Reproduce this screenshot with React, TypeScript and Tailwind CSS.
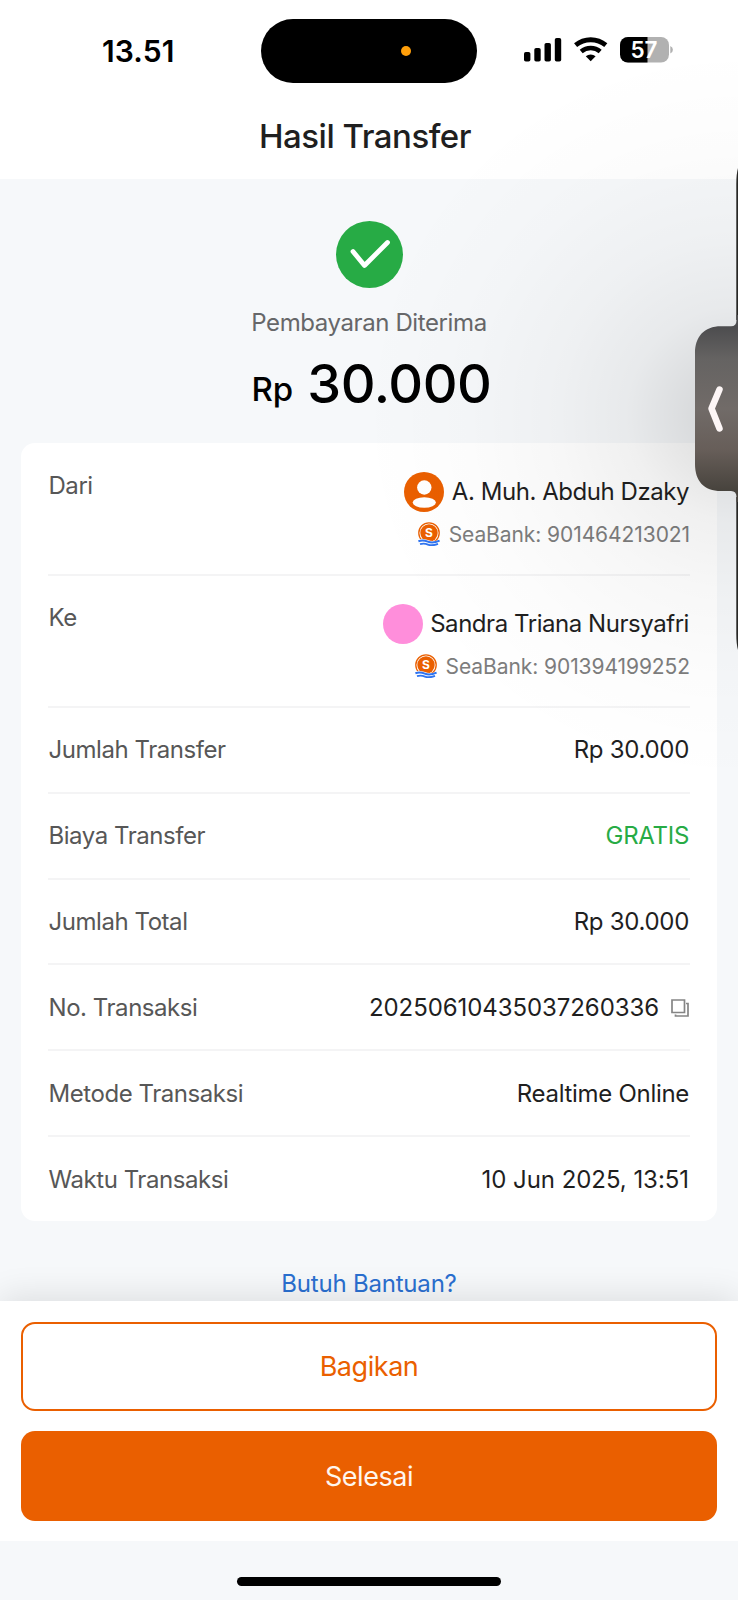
import type { ReactNode } from "react";

function StatusBar() {
  return (
    <div className="flex h-[101px] items-start">
      <div className="mt-[36px] w-[261px] pl-[102px] text-[30px] font-semibold leading-[30px] tracking-[0.1px] text-black">
        13.51
      </div>
      <div className="mt-[19px] flex h-[63.5px] w-[216px] items-center rounded-full bg-black pl-[140px] pt-px">
        <span className="size-[10px] rounded-full bg-[#ff9f0a]" />
      </div>
      <svg className="ml-[47px] mt-[37px]" width="150" height="26" viewBox="0 0 150 26">
        <rect x="0" y="15" width="6.4" height="9.5" rx="1.8" />
        <rect x="10.3" y="11" width="6.4" height="13.5" rx="1.8" />
        <rect x="20.5" y="6" width="6.4" height="18.5" rx="1.8" />
        <rect x="30.8" y="1" width="6.4" height="23.5" rx="1.8" />
        <path d="M51.6 8.2a23.6 23.6 0 0 1 30.2 0" fill="none" stroke="#000" strokeWidth="4.8" />
        <path d="M57.2 14.5a14.6 14.6 0 0 1 19 0" fill="none" stroke="#000" strokeWidth="4.5" />
        <path d="M66.7 24.2l-4.9-4.9a7.2 7.2 0 0 1 9.8 0z" />
        <clipPath id="charge">
          <rect x="96" y="0" width="27.5" height="26" />
        </clipPath>
        <rect x="96" y="0" width="49" height="25.6" rx="8" fill="#b1b1b1" />
        <rect x="96" y="0" width="49" height="25.6" rx="8" clipPath="url(#charge)" />
        <path d="M146.3 9q2.6 1 2.6 3.8t-2.6 3.8z" fill="#b1b1b1" />
        <text x="120" y="21" textAnchor="middle" fill="#fff" fontSize="22.5" fontWeight="600">
          57
        </text>
      </svg>
    </div>
  );
}

function SeaBankIcon() {
  return (
    <svg className="-mt-[3px]" width="22" height="24" viewBox="0 0 22 24">
      <circle cx="11" cy="11" r="10.2" fill="#fff" stroke="#ea5f00" strokeWidth="1.3" />
      <circle cx="11" cy="11" r="8.7" fill="#ea5f00" />
      <text x="11" y="15" textAnchor="middle" fontSize="12" fontWeight="700" fill="#fff">
        S
      </text>
      <path d="M0 17.5q5-1.5 10 .6t12-.6V24H0z" fill="#fff" />
      <path d="M.4 19.2q4.6-1.7 9.4.4t11.8-.9" fill="none" stroke="#2f74f0" strokeWidth="2" />
      <path d="M2 22.2q4-1.3 8 .4t10-.8" fill="none" stroke="#2f74f0" strokeWidth="1.9" />
    </svg>
  );
}

function UserAvatar() {
  return (
    <svg className="mr-px" width="40" height="40" viewBox="0 0 40 40">
      <circle cx="20" cy="20" r="20" fill="#ea5f00" />
      <circle cx="20.3" cy="15.5" r="7.2" fill="#fff" />
      <ellipse cx="20.3" cy="30.5" rx="11.6" ry="5.2" fill="#fff" />
    </svg>
  );
}

type PartyProps = { label: string; avatar: ReactNode; name: string; account: string; box: string };

function Party({ label, avatar, name, account, box }: PartyProps) {
  return (
    <div className={`flex justify-between border-b-2 border-[#f4f4f5] ${box}`}>
      <div className="pl-[0.5px] text-2xl leading-[25px] tracking-[-0.45px] text-[#575757]">{label}</div>
      <div className="flex flex-col items-end justify-end pb-[26px]">
        <div className="flex h-10 items-center gap-[7px] pr-px">
          {avatar}
          <span className="text-2xl tracking-[-0.45px]">{name}</span>
        </div>
        <div className="mt-[10px] flex h-[26px] items-center gap-[9px]">
          <SeaBankIcon />
          <span className="text-[21px] leading-[26px] tracking-[-0.08px] text-[#7d7d7d]">SeaBank: {account}</span>
        </div>
      </div>
    </div>
  );
}

type RowProps = { label: string; children: ReactNode; last?: boolean; track?: string };

function Row({ label, children, last, track = "tracking-[-0.3px]" }: RowProps) {
  return (
    <div
      className={`flex flex-1 items-center justify-between pl-[0.5px] pr-px pt-px text-2xl ${last ? "" : "border-b-2 border-[#f4f4f5]"}`}
    >
      <span className="tracking-[-0.45px] text-[#575757]">{label}</span>
      <span className={`flex items-center ${track}`}>{children}</span>
    </div>
  );
}

function SidePanel() {
  return (
    <div className="pointer-events-none absolute right-0 top-0 h-[900px] w-[420px] overflow-hidden">
      <div className="absolute inset-0 bg-[radial-gradient(ellipse_380px_370px_at_420px_415px,rgba(0,0,0,0.16)_0%,rgba(0,0,0,0.11)_14%,rgba(0,0,0,0.06)_29%,rgba(0,0,0,0.03)_48%,rgba(0,0,0,0.01)_72%,transparent_100%)]" />
      <svg className="absolute right-0 top-[160px]" width="44" height="500" viewBox="0 0 44 500">
        <defs>
          <linearGradient id="tab" x1="0" y1="166" x2="0" y2="331" gradientUnits="userSpaceOnUse">
            <stop offset="0" stopColor="#4c4c4e" />
            <stop offset=".2" stopColor="#656362" />
            <stop offset=".5" stopColor="#716b68" />
            <stop offset=".75" stopColor="#675e59" />
            <stop offset="1" stopColor="#47433d" />
          </linearGradient>
        </defs>
        <path d="M44 8Q42.3 14 42.3 24V160H44zM42.3 337H44V490Q42.3 484 42.3 474z" fill="#272725" />
        <path
          d="M44 155H42.5V160Q42.5 166.3 37 166.3H27C10 166.3 1 177 1 193V304C1 321 10 331 27 331H37Q42.5 331 42.5 337V342H44z"
          fill="url(#tab)"
        />
        <path
          d="M25.5 229.5L17.5 248.5L25.5 268.5"
          fill="none"
          stroke="#fdf6f6"
          strokeWidth="6.5"
          strokeLinecap="round"
          strokeLinejoin="round"
        />
      </svg>
    </div>
  );
}

export default function App() {
  return (
    <div className="relative flex h-[1600px] w-[738px] flex-col overflow-hidden bg-[#f6f8fa] font-['Inter',sans-serif] text-[#1f1f1f]">
      <header className="h-[179px] bg-white">
        <StatusBar />
        <h1 className="-ml-2 text-center text-[33px] font-medium leading-[70px] tracking-[-0.5px]">Hasil Transfer</h1>
      </header>

      <section className="flex h-[264px] flex-col items-center pt-[42px]">
        <svg width="67" height="67" viewBox="0 0 67 67">
          <circle cx="33.5" cy="33.5" r="33.5" fill="#27ab45" />
          <path
            d="M17 30.5L28.5 44.5L51.5 21.5"
            fill="none"
            stroke="#fff"
            strokeWidth="4.8"
            strokeLinecap="round"
            strokeLinejoin="round"
          />
        </svg>
        <p className="mt-5 text-2xl leading-[30px] tracking-[-0.4px] text-[#666769]">Pembayaran Diterima</p>
        <p className="mt-[16px] flex items-baseline pl-[5px] leading-[60px] text-black">
          <span className="self-end text-[33px] font-medium leading-[50px]">Rp</span>
          <span className="ml-[14px] text-[54px] font-medium tracking-[-0.4px]">30.000</span>
        </p>
      </section>

      <main className="mx-[21px] flex h-[778px] shrink-0 flex-col rounded-[14px] bg-white px-[27px]">
        <Party
          label="Dari"
          avatar={<UserAvatar />}
          name="A. Muh. Abduh Dzaky"
          account="901464213021"
          box="h-[133px] pt-[30px]"
        />
        <Party
          label="Ke"
          avatar={<span className="size-10 rounded-full bg-[#ff8edb]" />}
          name="Sandra Triana Nursyafri"
          account="901394199252"
          box="h-[132px] pt-[29px]"
        />
        <Row label="Jumlah Transfer">Rp 30.000</Row>
        <Row label="Biaya Transfer">
          <span className="text-[#27ab45]">GRATIS</span>
        </Row>
        <Row label="Jumlah Total">Rp 30.000</Row>
        <Row label="No. Transaksi" track="tracking-[-0.08px]">
          20250610435037260336
          <svg className="ml-[12px]" width="18" height="18" viewBox="0 0 18 18" fill="none" stroke="#858585" strokeWidth="1.7">
            <path d="M1 1H13.5V13.5H1zM15 4.5H17V17H4.5V15.5" />
          </svg>
        </Row>
        <Row label="Metode Transaksi">Realtime Online</Row>
        <Row label="Waktu Transaksi" track="tracking-[-0.05px]" last>
          10 Jun 2025, 13:51
        </Row>
      </main>

      <div className="flex h-[80px] shrink-0 items-end justify-center pb-[2px]">
        <a className="text-2xl leading-[30px] tracking-[-0.2px] text-[#2a6fd0]">Butuh Bantuan?</a>
      </div>

      <footer className="flex h-[240px] shrink-0 flex-col gap-5 bg-white px-[21px] pt-[21px] text-[27px] tracking-[-0.45px] shadow-[0_-4px_32px_rgba(0,0,0,0.11)]">
        <button className="h-[89px] rounded-[14px] border-2 border-[#ea5f00] pt-[2px] text-[#ea5f00]">Bagikan</button>
        <button className="h-[90px] rounded-[14px] bg-[#ea5f00] pt-[2px] text-[#fff6ee]">Selesai</button>
      </footer>
      <div className="z-10 flex flex-1 justify-center bg-[#f6f8fa] pt-[36px]">
        <div className="h-[9px] w-[264px] rounded-full bg-black" />
      </div>
      <SidePanel />
    </div>
  );
}
